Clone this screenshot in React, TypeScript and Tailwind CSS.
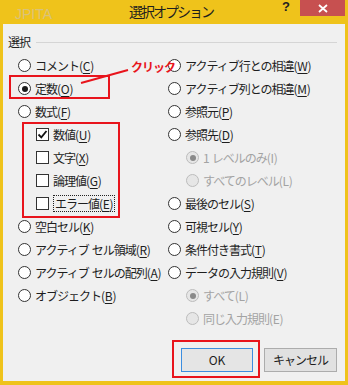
import clsx from "clsx"

const jp = "font-['Noto_Sans_CJK_JP','Noto_Sans',sans-serif]"

function Radio({ checked, disabled }: { checked?: boolean; disabled?: boolean }) {
  return (
    <span
      className={clsx(
        "flex h-[13px] w-[13px] shrink-0 items-center justify-center rounded-full border",
        disabled ? "border-[#bcbcbc] bg-[#e6e6e6]" : "border-[#333333] bg-white"
      )}
    >
      {checked && <span className={clsx("h-[6px] w-[6px] rounded-full", disabled ? "bg-[#8a8a8a]" : "bg-[#1a1a1a]")} />}
    </span>
  )
}

function Check({ checked }: { checked?: boolean }) {
  return (
    <span className="flex h-[13px] w-[13px] shrink-0 items-center justify-center border border-[#333333] bg-white">
      {checked && (
        <svg width="11" height="11" viewBox="0 0 11 11">
          <path d="M1.5 5.5 L4.3 8.3 L9.5 2" fill="none" stroke="#111" strokeWidth="1.8" />
        </svg>
      )}
    </span>
  )
}

function Label({ text, k, disabled }: { text: string; k: string; disabled?: boolean }) {
  const parts = text.split(" ")
  return (
    <span className={clsx("flex items-center whitespace-nowrap", disabled ? "text-[#a3a3a3]" : "text-[#1e1e1e]")}>
      {parts.map((p, i) => (
        <span key={i} className={clsx("tracking-[-1px]", i > 0 && "ml-[3px]")}>
          {p}
        </span>
      ))}
      <span className="tracking-[-0.3px]">
        ({disabled ? k : <span className="underline underline-offset-2">{k}</span>})
      </span>
    </span>
  )
}

type Row = { text: string; k: string; kind: "radio" | "check"; checked?: boolean; disabled?: boolean; indent?: boolean; focus?: boolean }

const left: Row[] = [
  { text: "コメント", k: "C", kind: "radio" },
  { text: "定数", k: "O", kind: "radio", checked: true },
  { text: "数式", k: "F", kind: "radio" },
  { text: "数値", k: "U", kind: "check", checked: true, indent: true },
  { text: "文字", k: "X", kind: "check", indent: true },
  { text: "論理値", k: "G", kind: "check", indent: true },
  { text: "エラー値", k: "E", kind: "check", indent: true, focus: true },
  { text: "空白セル", k: "K", kind: "radio" },
  { text: "アクティブ セル領域", k: "R", kind: "radio" },
  { text: "アクティブ セルの配列", k: "A", kind: "radio" },
  { text: "オブジェクト", k: "B", kind: "radio" },
]

const right: Row[] = [
  { text: "アクティブ行との相違", k: "W", kind: "radio" },
  { text: "アクティブ列との相違", k: "M", kind: "radio" },
  { text: "参照元", k: "P", kind: "radio" },
  { text: "参照先", k: "D", kind: "radio" },
  { text: "1 レベルのみ", k: "I", kind: "radio", checked: true, disabled: true, indent: true },
  { text: "すべてのレベル", k: "L", kind: "radio", disabled: true, indent: true },
  { text: "最後のセル", k: "S", kind: "radio" },
  { text: "可視セル", k: "Y", kind: "radio" },
  { text: "条件付き書式", k: "T", kind: "radio" },
  { text: "データの入力規則", k: "V", kind: "radio" },
  { text: "すべて", k: "L", kind: "radio", checked: true, disabled: true, indent: true },
  { text: "同じ入力規則", k: "E", kind: "radio", disabled: true, indent: true },
]

function OptionRow({ row }: { row: Row }) {
  return (
    <div className={clsx("flex h-[23px] items-center gap-[4px]", row.indent && "pl-[18px]")}>
      {row.kind === "radio" ? <Radio checked={row.checked} disabled={row.disabled} /> : <Check checked={row.checked} />}
      <span className={clsx(row.focus && "border border-dotted border-[#222] px-px leading-[15px]")}>
        <Label text={row.text} k={row.k} disabled={row.disabled} />
      </span>
    </div>
  )
}

export default function App() {
  return (
    <div className={clsx("relative flex h-[385px] w-[348px] flex-col bg-[#efc31b] text-[12px]", jp)}>
      <div className="flex h-[24px] items-start">
        <span className="ml-[15px] mt-[7px] text-[14px] leading-[14px] text-[#d9c27a] font-['Liberation_Sans',sans-serif]">JPITA</span>
        <span className="ml-[77px] mt-[3px] text-[14px] leading-[17px] tracking-[-2px] text-[#1e1e1e]">選択オプション</span>
        <span className="ml-auto text-[13px] font-bold leading-[13px] text-[#222] font-['Liberation_Sans',sans-serif]">?</span>
        <span className="ml-[10px] mr-[3px] flex h-[16px] w-[45px] items-center justify-center bg-[#c75050]">
          <svg width="10" height="9" viewBox="0 0 10 9">
            <path d="M1 1 L9 8 M9 1 L1 8" stroke="#fff" strokeWidth="1.8" />
          </svg>
        </span>
      </div>

      <div className="mx-[3px] mb-[4px] flex flex-1 flex-col bg-[#f0f0f0]">
        <div className="mt-[8px] flex h-[20px] items-center pl-[5px] pr-[8px]">
          <span className="tracking-[-1px] text-[#1e1e1e]">選択</span>
          <span className="ml-[6px] h-px flex-1 bg-[#d5d5d5]" />
        </div>

        <div className="mt-[2px] grid grid-cols-[165px_1fr]">
          <div className="flex flex-col pl-[15px]">
            {left.map((r) => (
              <OptionRow key={r.text} row={r} />
            ))}
          </div>
          <div className="flex flex-col">
            {right.map((r) => (
              <OptionRow key={r.text + r.k} row={r} />
            ))}
          </div>
        </div>

        <div className="mt-auto flex justify-end gap-[11px] pb-[9px] pr-[8px]">
          <button className="h-[24px] w-[72px] border border-[#3c8ee0] bg-[#e5e5e5] text-[12px] text-[#1e1e1e]">OK</button>
          <button className="h-[24px] w-[73px] border border-[#acacac] bg-[#e1e1e1] text-[12px] tracking-[-1px] text-[#1e1e1e]">キャンセル</button>
        </div>
      </div>

      {/* annotations */}
      <div className="absolute left-[9px] top-[75px] h-[24px] w-[101px] border-2 border-[#e8141c]" />
      <div className="absolute left-[22px] top-[122px] h-[96px] w-[98px] border-2 border-[#e8141c]" />
      <div className="absolute left-[172px] top-[340px] h-[38px] w-[88px] border-2 border-[#e8141c]" />
      <span className="absolute left-[131px] top-[58px] text-[12px] font-bold tracking-[-1px] text-[#e8141c]">クリック</span>
      <svg className="absolute left-0 top-0" width="348" height="385">
        <path d="M128 70 L81 83" stroke="#e8141c" strokeWidth="2" />
      </svg>
    </div>
  )
}
